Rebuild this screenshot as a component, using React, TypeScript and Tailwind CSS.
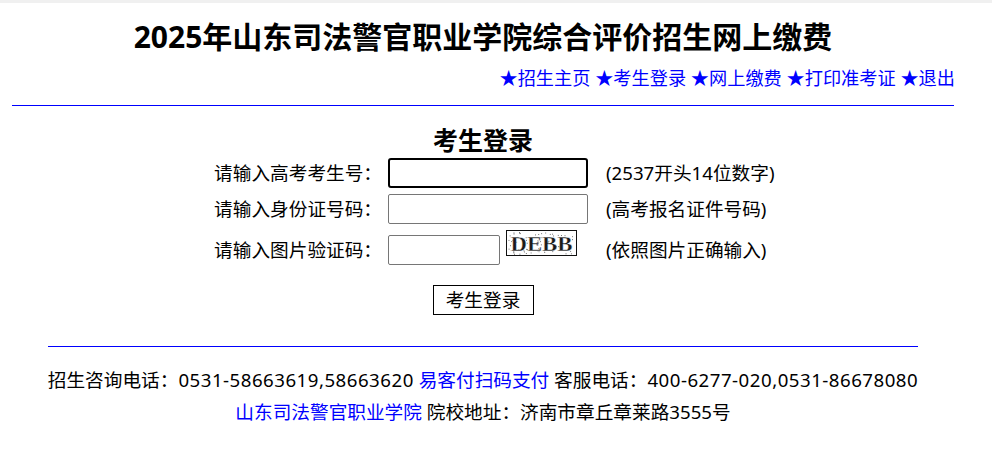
import React from "react";

const font = { fontFamily: '"Noto Sans", "Noto Sans CJK SC", sans-serif' } as React.CSSProperties;

function Captcha() {
  const dots: [number, number][] = [];
  let s = 7;
  for (let i = 0; i < 80; i++) {
    s = (s * 9301 + 49297) % 233280;
    const x = 2 + (s / 233280) * 67;
    s = (s * 9301 + 49297) % 233280;
    const y = 2 + (s / 233280) * 22;
    dots.push([x, y]);
  }
  return (
    <svg width="71" height="26" viewBox="0 0 71 26" className="mb-[14px] ml-[6px] shrink-0">
      <rect x="0.5" y="0.5" width="70" height="25" fill="#fff" stroke="#111" />
      {dots.map(([x, y], i) => (
        <rect key={i} x={x} y={y} width="1" height="1" fill="#777" />
      ))}
      <text
        x="35.5"
        y="20.5"
        textAnchor="middle"
        fontFamily='"Liberation Serif", serif'
        fontWeight="bold"
        fontSize="22"
        fill="#1a1a1a"
        stroke="#fff"
        strokeWidth="0.3"
        textLength="62"
        lengthAdjust="spacingAndGlyphs"
      >
        DEBB
      </text>
    </svg>
  );
}

export default function App() {
  return (
    <div className="min-h-[458px] w-[992px] bg-white text-black" style={font}>
      <div className="h-[3px] bg-[#f0f0f0]" />
      <div className="w-[966px]">
        <h1 className="mt-[14px] text-center text-[30px] font-bold leading-[40px]">
          2025年山东司法警官职业学院综合评价招生网上缴费
        </h1>
        <div className="mt-[9px] pr-[11px] text-right text-[18.2px] leading-[24px] text-[#0000ff]">
          <a>★招生主页</a> <a>★考生登录</a> <a>★网上缴费</a> <a>★打印准考证</a> <a>★退出</a>
        </div>
        <div className="mx-[12px] mt-[15px] h-px bg-[#0000ff]" />

        <h2 className="mt-[19px] text-center text-[25px] font-bold leading-[30px]">考生登录</h2>

        <div className="mt-[1px] flex flex-col text-[18.67px]">
          <div className="flex h-[34px] items-center">
            <div className="w-[382px] text-right">请输入高考考生号：</div>
            <div className="w-[224px] pl-[6px]">
              <div className="h-[30px] w-[200px] rounded-[3px] border-2 border-black bg-white" />
            </div>
            <div>(2537开头14位数字)</div>
          </div>
          <div className="mt-[2px] flex h-[34px] items-center">
            <div className="w-[382px] text-right">请输入身份证号码：</div>
            <div className="w-[224px] pl-[6px]">
              <div className="h-[30px] w-[200px] rounded-[2px] border border-[#767676] bg-white" />
            </div>
            <div>(高考报名证件号码)</div>
          </div>
          <div className="mt-[6px] flex h-[36px] items-center">
            <div className="w-[382px] text-right">请输入图片验证码：</div>
            <div className="flex w-[224px] items-center pl-[6px]">
              <div className="h-[30px] w-[112px] shrink-0 rounded-[2px] border border-[#767676] bg-white" />
              <Captcha />
            </div>
            <div>(依照图片正确输入)</div>
          </div>
        </div>

        <div className="mt-[17px] flex justify-center">
          <div className="flex h-[30px] w-[101px] items-center justify-center border border-black text-[18.67px] leading-none">
            考生登录
          </div>
        </div>

        <div className="mx-[48px] mt-[31px] h-px bg-[#0000ff]" />

        <div className="mt-[17px] whitespace-nowrap text-center text-[18.67px] leading-[32px]">
          <div>
            招生咨询电话：<span className="tracking-[0.5px]">0531-58663619,58663620</span>{" "}
            <a className="text-[#0000ff]">易客付扫码支付</a> 客服电话：
            <span className="tracking-[0.5px]">400-6277-020,0531-86678080</span>
          </div>
          <div>
            <a className="text-[#0000ff]">山东司法警官职业学院</a> 院校地址：济南市章丘章莱路3555号
          </div>
        </div>
      </div>
    </div>
  );
}
